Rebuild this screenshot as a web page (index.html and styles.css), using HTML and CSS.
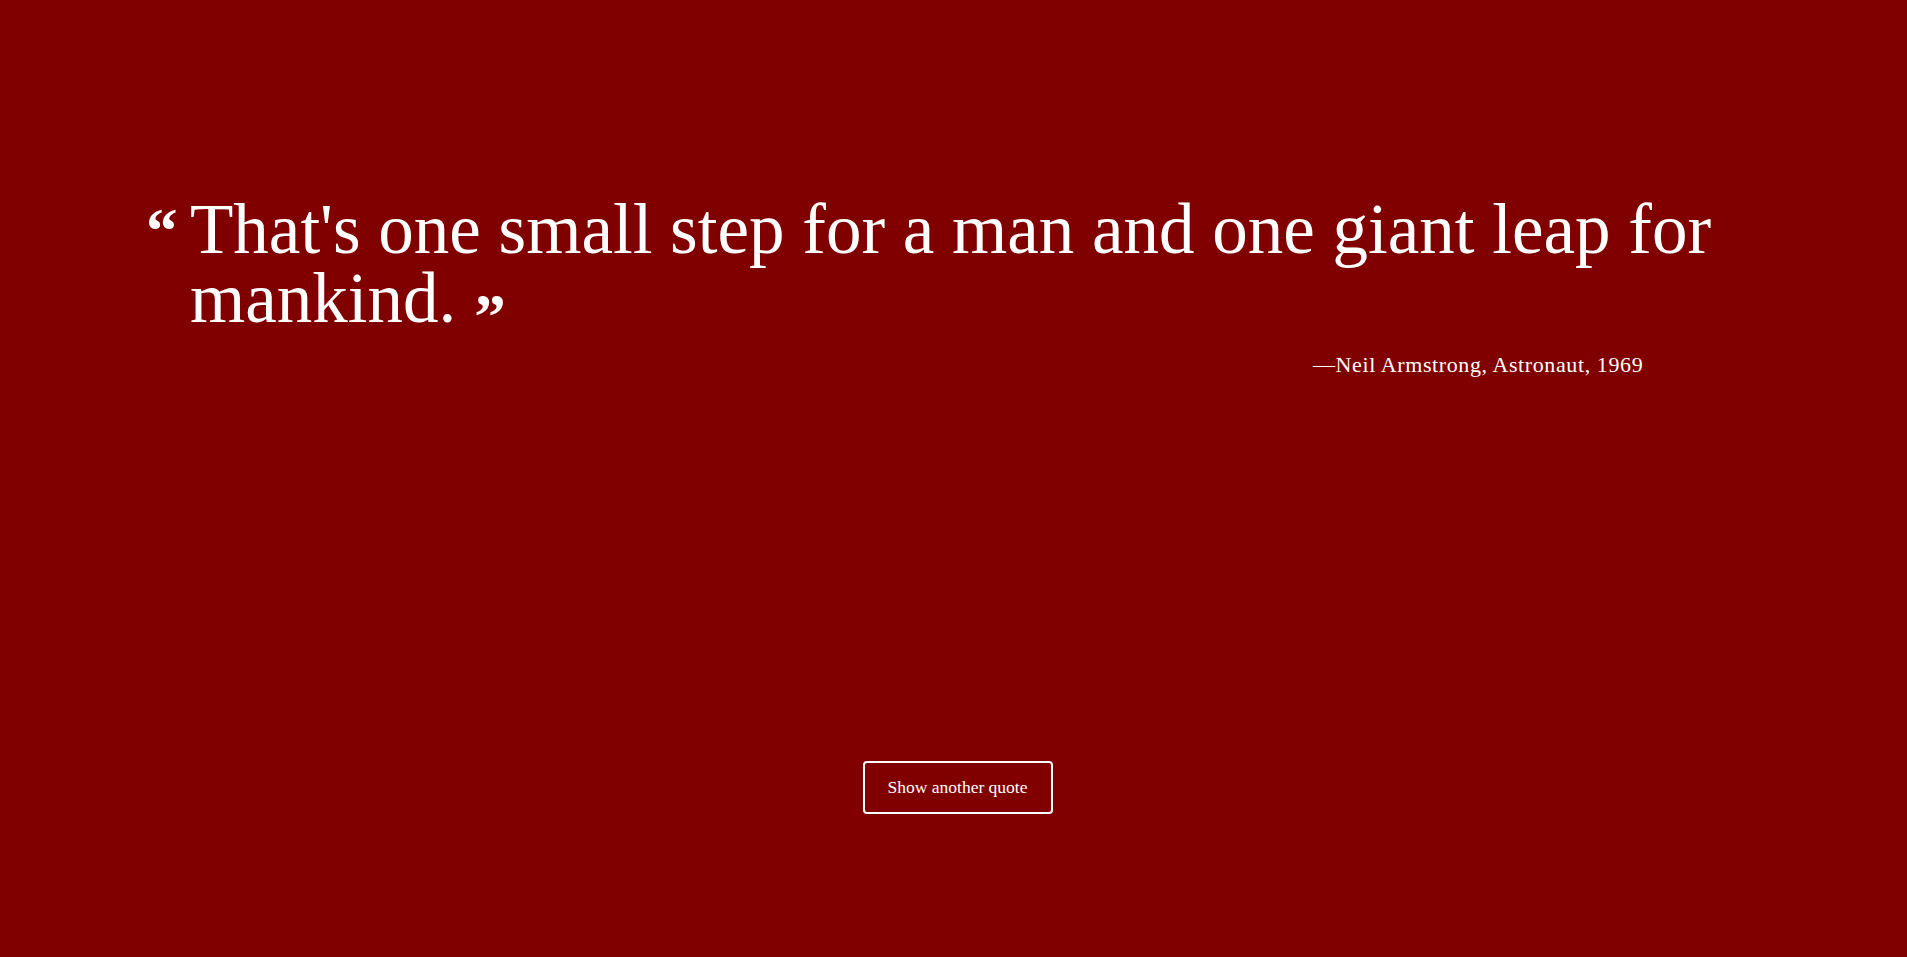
FILE: index.html
```html
<!DOCTYPE html>
<html lang="en">
<head>
<meta charset="utf-8">
<title>Quote</title>
<link rel="stylesheet" href="styles.css">
</head>
<body>
<main class="page">
  <blockquote class="quote">
    <div class="quote-row">
      <span class="qmark qmark-open">&ldquo;</span>
      <p class="quote-text">That's one small step for a man and one giant leap for mankind.<span class="qmark qmark-close">&rdquo;</span></p>
    </div>
    <footer class="attribution">&mdash;Neil Armstrong, Astronaut, 1969</footer>
  </blockquote>
  <div class="actions">
    <button class="btn" type="button">Show another quote</button>
  </div>
</main>
</body>
</html>
```
FILE: styles.css
```css
html, body {
  margin: 0;
  padding: 0;
  height: 100%;
}
body {
  background: #800000;
  color: #ffffff;
  font-family: "Liberation Serif", "Times New Roman", serif;
}
.page {
  min-height: 100vh;
  display: flex;
  flex-direction: column;
  padding: 195px 0 0 146px;
  box-sizing: border-box;
}
.quote {
  margin: 0;
  width: 1620px;
}
.quote-row {
  display: flex;
  align-items: flex-start;
}
.qmark {
  font-family: "Liberation Serif", serif;
  font-weight: bold;
  font-size: 63px;
  line-height: 1;
}
.qmark-open {
  width: 44px;
  flex: none;
  padding-top: 5px;
}
.qmark-close {
  line-height: 0;
  margin-left: 18px;
  vertical-align: -16px;
}
.quote-text {
  margin: 0;
  font-size: 71px;
  line-height: 69px;
}
.attribution {
  margin: 19px 0 0 0;
  padding-left: 1167px;
  font-size: 22px;
  line-height: 26px;
  letter-spacing: 0.6px;
}
.actions {
  display: flex;
  justify-content: center;
  margin-top: 383px;
  padding-right: 146px;
}
.btn {
  background: transparent;
  color: #ffffff;
  border: 2px solid #ffffff;
  border-radius: 4px;
  width: 190px;
  height: 53px;
  font-family: "Liberation Serif", "Times New Roman", serif;
  font-size: 17.5px;
  margin-left: 8px;
  cursor: pointer;
}
```
